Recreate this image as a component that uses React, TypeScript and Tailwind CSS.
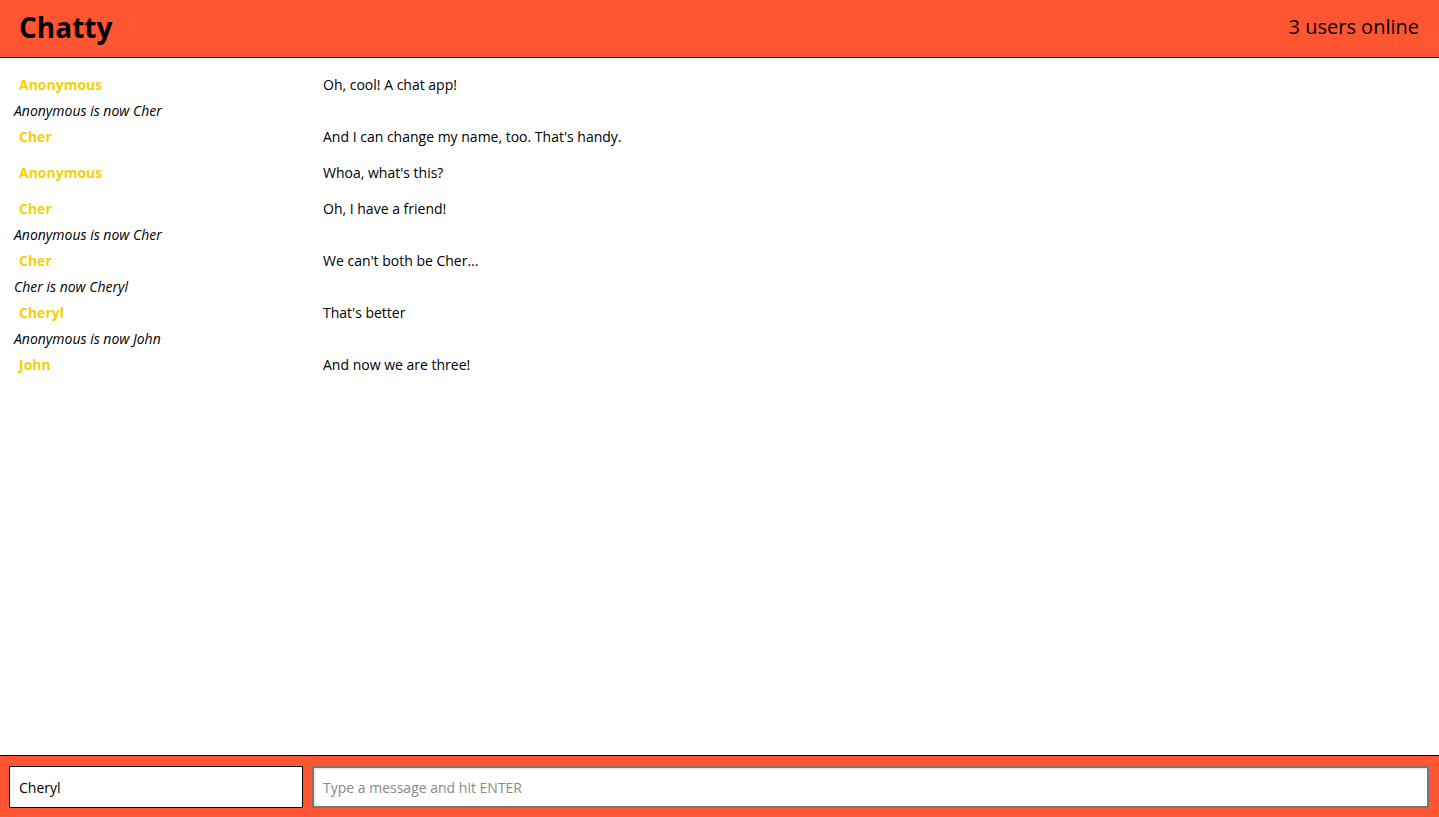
type Item =
  | { type: 'message'; username: string; content: string }
  | { type: 'notification'; content: string }

const items: Item[] = [
  { type: 'message', username: 'Anonymous', content: 'Oh, cool! A chat app!' },
  { type: 'notification', content: 'Anonymous is now Cher' },
  { type: 'message', username: 'Cher', content: "And I can change my name, too. That's handy." },
  { type: 'message', username: 'Anonymous', content: "Whoa, what's this?" },
  { type: 'message', username: 'Cher', content: 'Oh, I have a friend!' },
  { type: 'notification', content: 'Anonymous is now Cher' },
  { type: 'message', username: 'Cher', content: "We can't both be Cher..." },
  { type: 'notification', content: 'Cher is now Cheryl' },
  { type: 'message', username: 'Cheryl', content: "That's better" },
  { type: 'notification', content: 'Anonymous is now John' },
  { type: 'message', username: 'John', content: 'And now we are three!' },
]

export default function App() {
  return (
    <div
      className="flex flex-col h-screen bg-white text-black"
      style={{ fontFamily: '"Open Sans", "Liberation Sans", sans-serif' }}
    >
      {/* header */}
      <nav className="flex items-center justify-between h-[58px] pb-[4px] pl-[19px] pr-[20px] bg-[#ff5530] border-b border-black shrink-0">
        <span className="text-[28px] font-bold leading-none">Chatty</span>
        <span className="text-[20px] leading-none">3 users online</span>
      </nav>

      {/* messages */}
      <main className="flex-1 overflow-y-auto pt-[8px]">
        {items.map((item, i) =>
          item.type === 'message' ? (
            <div key={i} className="flex items-center h-[36px] pl-[14px] text-[14px]">
              <span className="w-[309px] pl-[5px] font-bold text-[#f7d000] shrink-0">
                {item.username}
              </span>
              <span className="font-normal">{item.content}</span>
            </div>
          ) : (
            <div key={i} className="flex items-center h-[16px] pl-[14px] text-[14px] italic font-normal">
              {item.content}
            </div>
          ),
        )}
      </main>

      {/* footer */}
      <footer className="flex items-start gap-[9px] h-[62px] pt-[10px] pl-[9px] pr-[10px] bg-[#ff5530] border-t border-black shrink-0">
        <input
          type="text"
          defaultValue="Cheryl"
          className="w-[294px] h-[42px] px-[9px] border border-black bg-white text-[14px] outline-none"
        />
        <input
          type="text"
          placeholder="Type a message and hit ENTER"
          className="flex-1 h-[42px] px-[9px] border-2 border-[#767676] bg-white text-[14px] outline-none placeholder:text-[#8a8a8a] shadow-[inset_1px_1px_2px_rgba(0,0,0,0.15)]"
        />
      </footer>
    </div>
  )
}
